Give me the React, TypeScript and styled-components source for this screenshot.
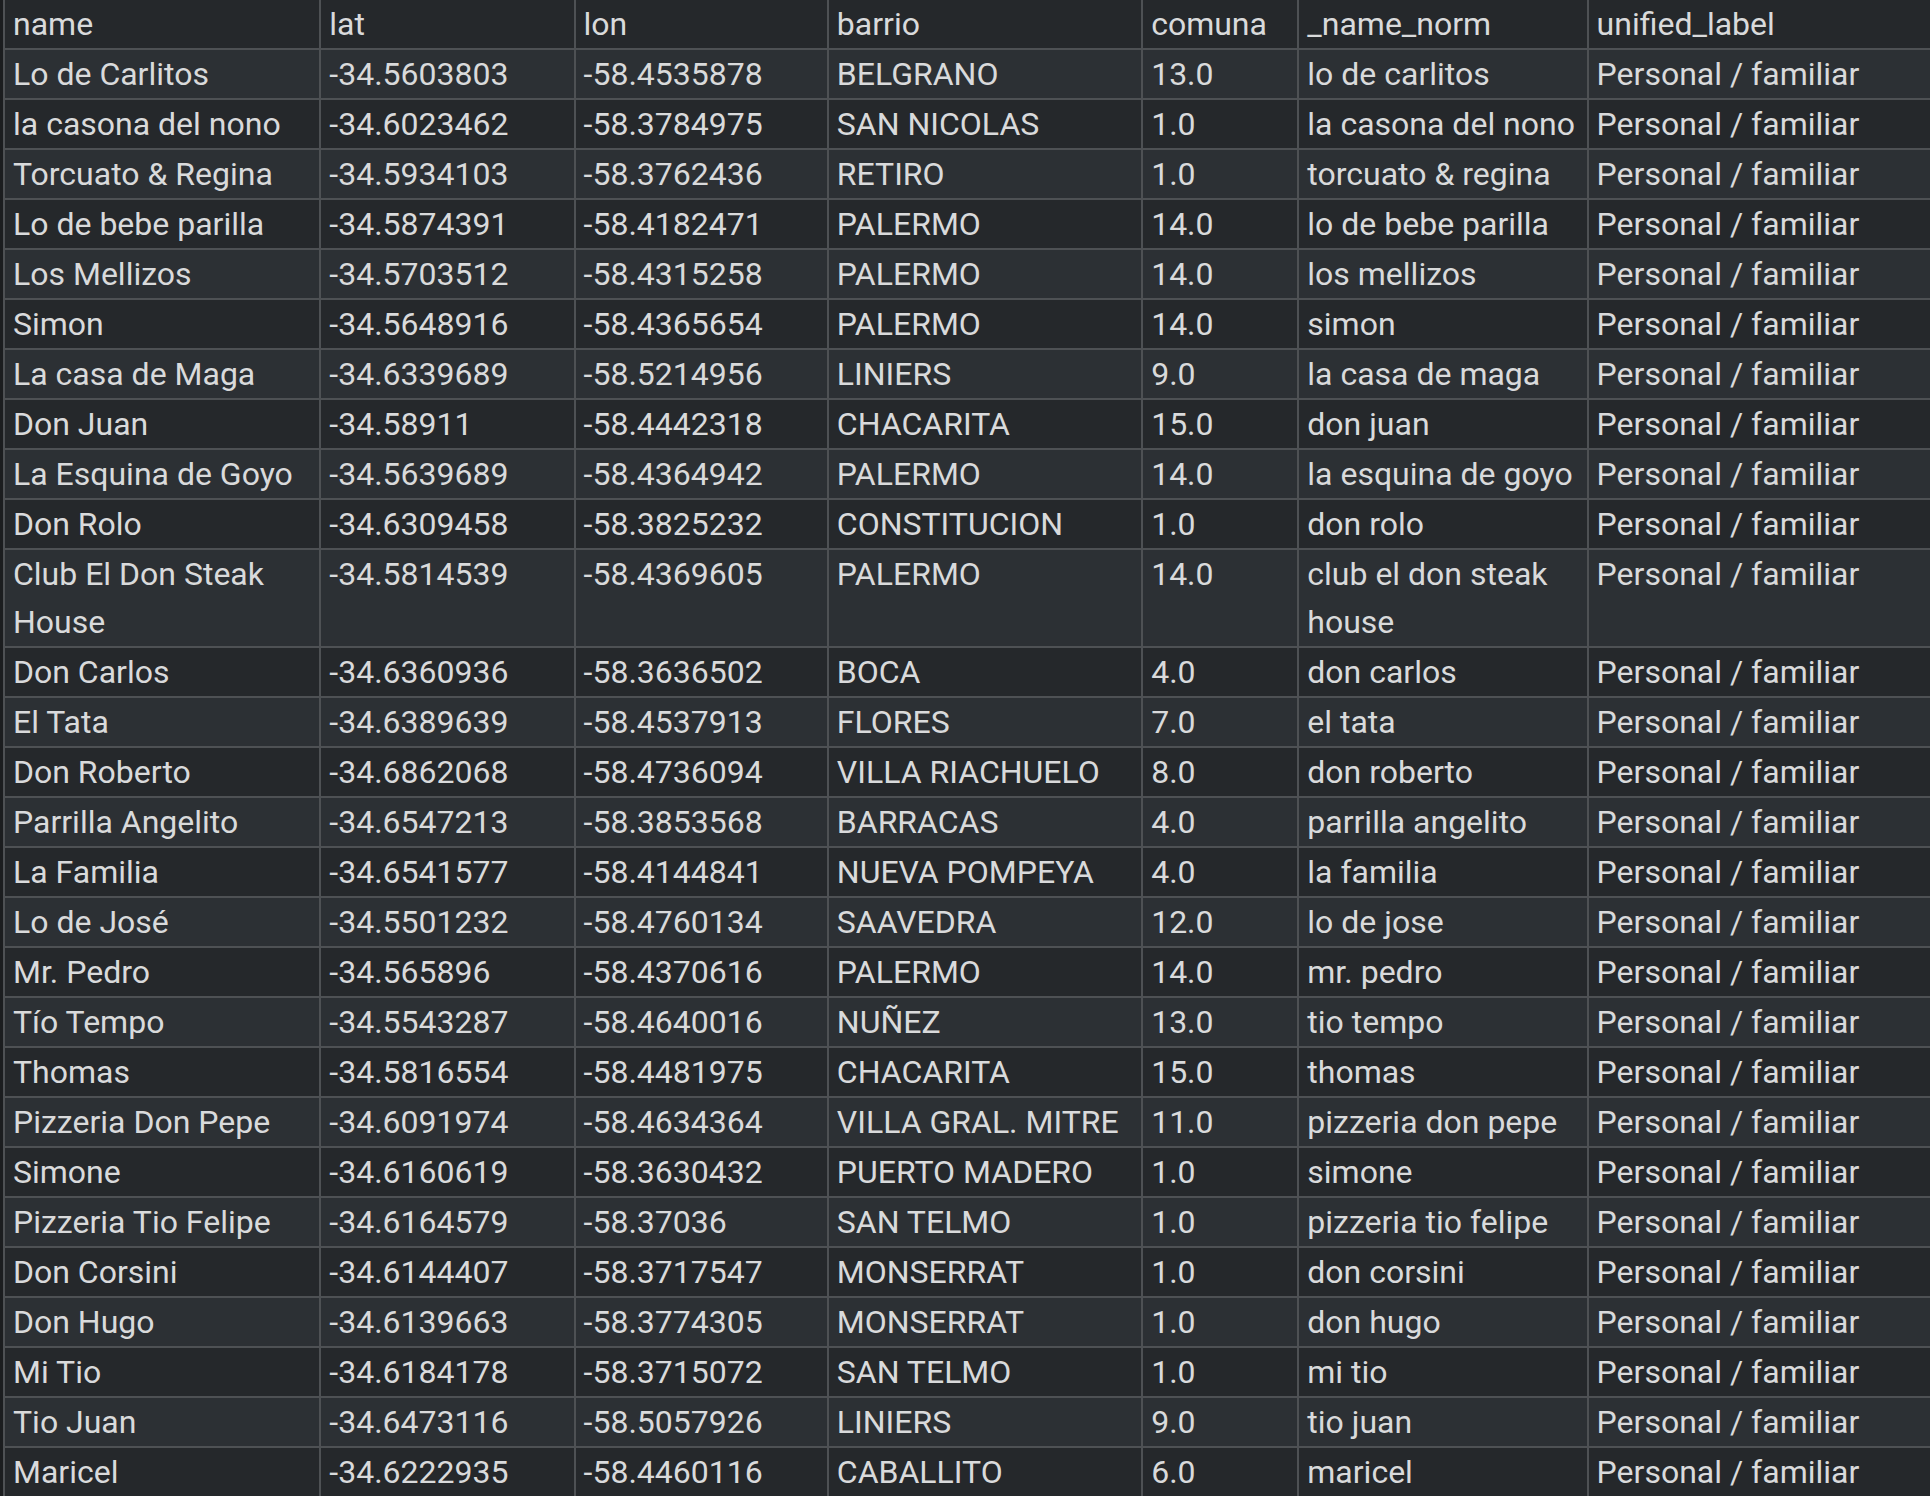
import React from "react";
import styled, { createGlobalStyle } from "styled-components";

const Global = createGlobalStyle`
  html, body { margin: 0; padding: 0; background: #25292c; }
  body { font-family: Roboto, "Liberation Sans", sans-serif; overflow: hidden; }
`;

const Wrap = styled.div`
  border-left: 3px solid #1b1d1f;
  width: 1930px;
  height: 1496px;
  overflow: hidden;
  box-sizing: border-box;
`;

const Table = styled.table`
  border-collapse: collapse;
  table-layout: fixed;
  width: 1930px;
  color: #d9dadb;
  font-size: 32px;
  line-height: 48px;
`;

const Row = styled.tr<{ $alt?: boolean }>`
  background: ${(p) => (p.$alt ? "#2c3034" : "#25282b")};
`;

const Th = styled.th`
  font-weight: 400;
  text-align: left;
  vertical-align: top;
  padding: 0 8px;
  height: 47px;
  border: 2px solid #4e5154;
  border-top: none;
  white-space: nowrap;
`;

const Td = styled.td`
  vertical-align: top;
  padding: 0 8px;
  height: 48px;
  border: 2px solid #4e5154;
`;

const widths = [316, 254, 253, 314, 156, 289, 344];
const headers = ["name", "lat", "lon", "barrio", "comuna", "_name_norm", "unified_label"];

const rows: string[][] = [
  ["Lo de Carlitos", "-34.5603803", "-58.4535878", "BELGRANO", "13.0", "lo de carlitos"],
  ["la casona del nono", "-34.6023462", "-58.3784975", "SAN NICOLAS", "1.0", "la casona del nono"],
  ["Torcuato & Regina", "-34.5934103", "-58.3762436", "RETIRO", "1.0", "torcuato & regina"],
  ["Lo de bebe parilla", "-34.5874391", "-58.4182471", "PALERMO", "14.0", "lo de bebe parilla"],
  ["Los Mellizos", "-34.5703512", "-58.4315258", "PALERMO", "14.0", "los mellizos"],
  ["Simon", "-34.5648916", "-58.4365654", "PALERMO", "14.0", "simon"],
  ["La casa de Maga", "-34.6339689", "-58.5214956", "LINIERS", "9.0", "la casa de maga"],
  ["Don Juan", "-34.58911", "-58.4442318", "CHACARITA", "15.0", "don juan"],
  ["La Esquina de Goyo", "-34.5639689", "-58.4364942", "PALERMO", "14.0", "la esquina de goyo"],
  ["Don Rolo", "-34.6309458", "-58.3825232", "CONSTITUCION", "1.0", "don rolo"],
  ["Club El Don Steak House", "-34.5814539", "-58.4369605", "PALERMO", "14.0", "club el don steak house"],
  ["Don Carlos", "-34.6360936", "-58.3636502", "BOCA", "4.0", "don carlos"],
  ["El Tata", "-34.6389639", "-58.4537913", "FLORES", "7.0", "el tata"],
  ["Don Roberto", "-34.6862068", "-58.4736094", "VILLA RIACHUELO", "8.0", "don roberto"],
  ["Parrilla Angelito", "-34.6547213", "-58.3853568", "BARRACAS", "4.0", "parrilla angelito"],
  ["La Familia", "-34.6541577", "-58.4144841", "NUEVA POMPEYA", "4.0", "la familia"],
  ["Lo de José", "-34.5501232", "-58.4760134", "SAAVEDRA", "12.0", "lo de jose"],
  ["Mr. Pedro", "-34.565896", "-58.4370616", "PALERMO", "14.0", "mr. pedro"],
  ["Tío Tempo", "-34.5543287", "-58.4640016", "NUÑEZ", "13.0", "tio tempo"],
  ["Thomas", "-34.5816554", "-58.4481975", "CHACARITA", "15.0", "thomas"],
  ["Pizzeria Don Pepe", "-34.6091974", "-58.4634364", "VILLA GRAL. MITRE", "11.0", "pizzeria don pepe"],
  ["Simone", "-34.6160619", "-58.3630432", "PUERTO MADERO", "1.0", "simone"],
  ["Pizzeria Tio Felipe", "-34.6164579", "-58.37036", "SAN TELMO", "1.0", "pizzeria tio felipe"],
  ["Don Corsini", "-34.6144407", "-58.3717547", "MONSERRAT", "1.0", "don corsini"],
  ["Don Hugo", "-34.6139663", "-58.3774305", "MONSERRAT", "1.0", "don hugo"],
  ["Mi Tio", "-34.6184178", "-58.3715072", "SAN TELMO", "1.0", "mi tio"],
  ["Tio Juan", "-34.6473116", "-58.5057926", "LINIERS", "9.0", "tio juan"],
  ["Maricel", "-34.6222935", "-58.4460116", "CABALLITO", "6.0", "maricel"],
];

export default function App() {
  return (
    <Wrap>
      <Global />
      <Table>
        <colgroup>
          {widths.map((w, i) => (
            <col key={i} style={{ width: w }} />
          ))}
        </colgroup>
        <thead>
          <Row>
            {headers.map((h) => (
              <Th key={h}>{h}</Th>
            ))}
          </Row>
        </thead>
        <tbody>
          {rows.map((r, i) => (
            <Row key={i} $alt={i % 2 === 0}>
              {r.map((c, j) => (
                <Td key={j}>{c}</Td>
              ))}
              <Td>Personal / familiar</Td>
            </Row>
          ))}
        </tbody>
      </Table>
    </Wrap>
  );
}
